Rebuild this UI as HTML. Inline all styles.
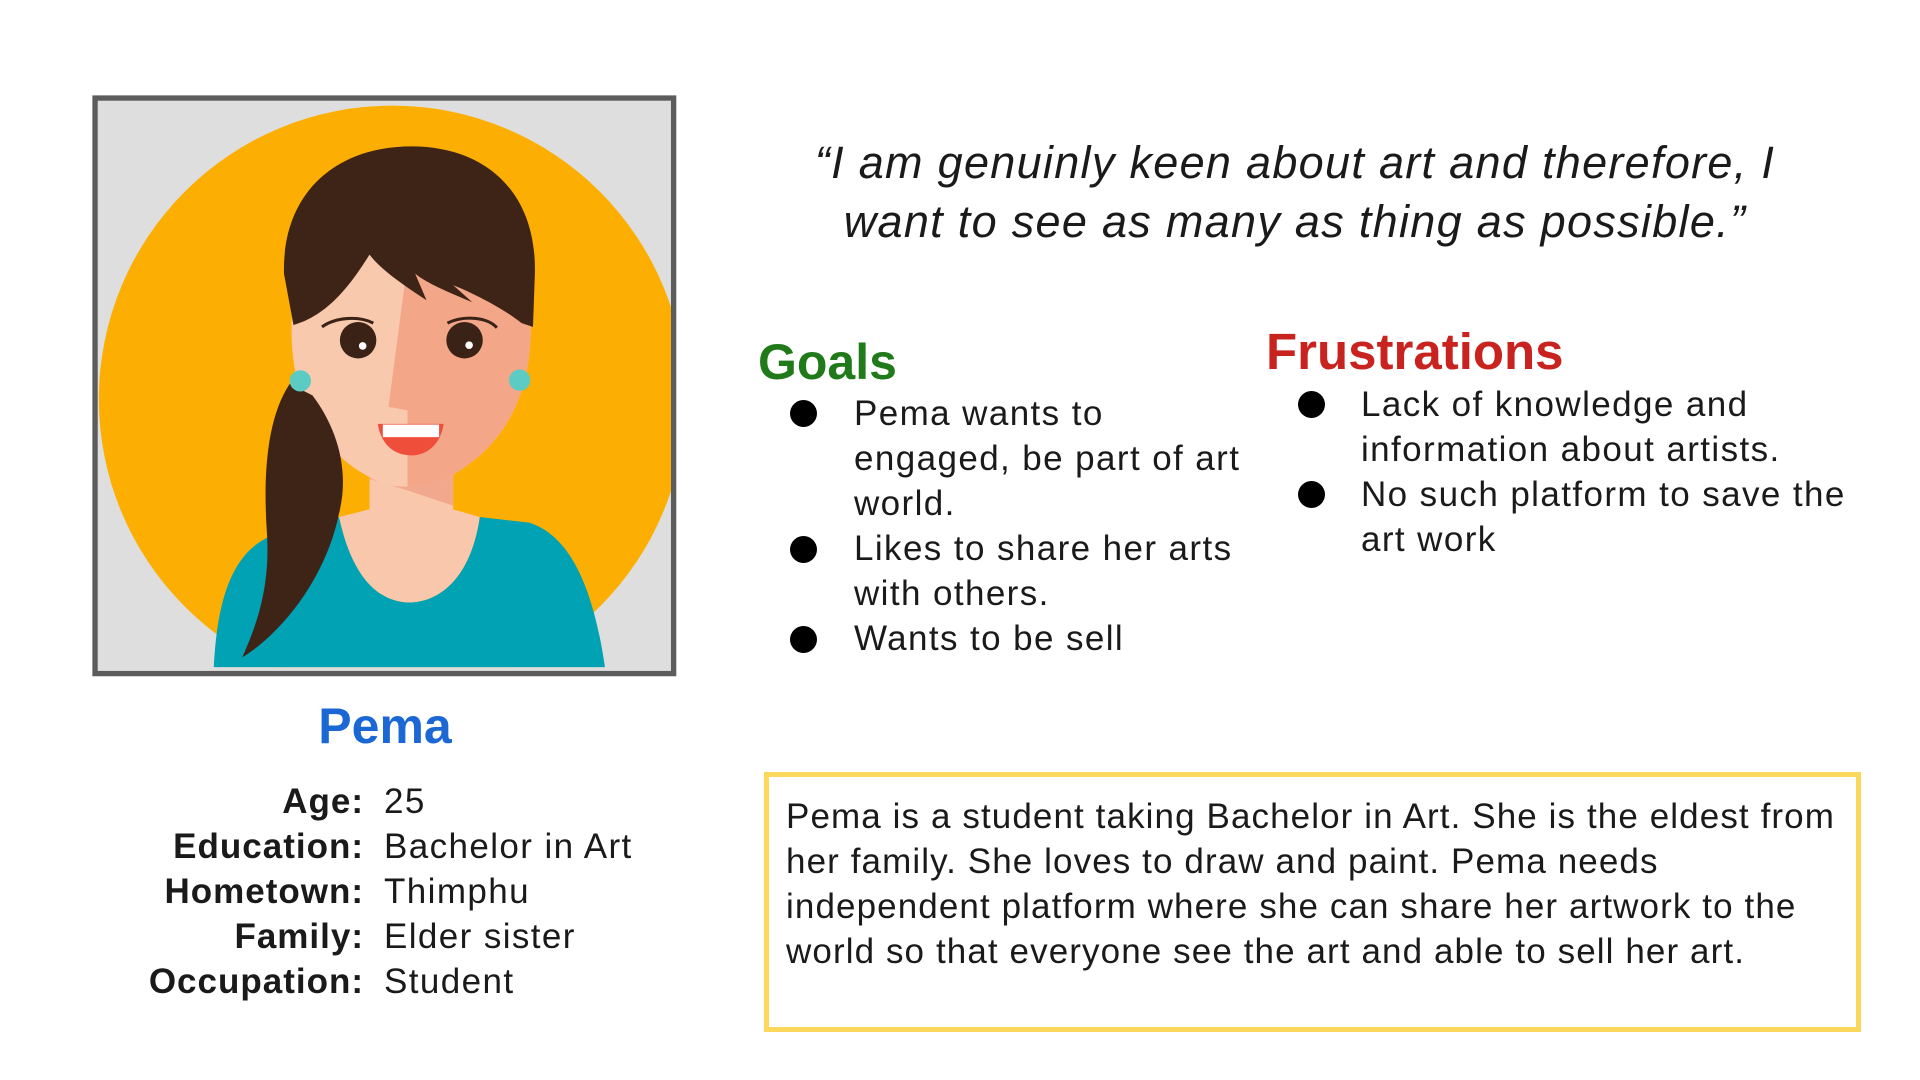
<!DOCTYPE html>
<html><head><meta charset="utf-8"><style>
html,body{margin:0;padding:0;background:#fff;}
body{width:1920px;height:1080px;position:relative;overflow:hidden;font-family:"Liberation Sans",sans-serif;color:#1a1a1a;}
.a{position:absolute;white-space:nowrap;}
.t{font-size:35px;line-height:45px;letter-spacing:1.4px;}
.dot{position:absolute;width:27px;height:27px;border-radius:50%;background:#000;}
</style></head><body>

<svg class="a" style="left:92px;top:95px" width="590" height="590" viewBox="0 0 1552 1552">
<defs>
<clipPath id="in"><rect x="15" y="15" width="1508" height="1490"/></clipPath>
<clipPath id="face"><path d="M525,600 C520,800 600,950 760,1020 C800,1035 880,1035 930,1010 C1080,930 1155,800 1155,600 L1150,420 L530,420 Z"/></clipPath>
</defs>
<rect x="8" y="8" width="1522" height="1514" fill="#dedede"/>
<g clip-path="url(#in)">
<circle cx="790" cy="800" r="772" fill="#fcaf02"/>
<path d="M320,1510 C330,1300 380,1200 470,1160 L650,1110 C680,1250 740,1330 830,1335 C930,1335 1000,1250 1020,1110 L1150,1125 C1260,1160 1320,1300 1350,1510 Z" fill="#00a2b3"/>
<path d="M730,960 L950,960 L950,1090 L1020,1110 C1000,1250 930,1335 830,1335 C740,1330 680,1250 650,1110 L730,1090 Z" fill="#f9c8ac"/>
<path d="M730,990 L950,990 L950,1080 L830,1040 L730,1010 Z" fill="#f2a88c"/>
<g clip-path="url(#face)">
<rect x="500" y="400" width="700" height="700" fill="#f9c9ae"/>
<path d="M830,440 L780,820 L830,830 L830,1100 L1200,1100 L1200,440 Z" fill="#f4a688"/>
</g>
<path d="M505,470 C500,250 650,135 840,135 C1040,135 1170,260 1165,470 L1160,610 L1130,600 C1080,560 1000,520 950,500 L1000,545 C940,520 880,495 850,470 L880,540 C820,500 760,460 730,420 C680,500 620,580 530,605 Z" fill="#3e2317"/>
<path d="M520,760 C460,850 450,1000 460,1150 C470,1300 430,1400 395,1480 C520,1400 620,1250 650,1100 C680,980 640,870 580,790 Z" fill="#3e2317"/>
<circle cx="700" cy="645" r="48" fill="#3b2217"/>
<circle cx="980" cy="645" r="48" fill="#3b2217"/>
<circle cx="712" cy="660" r="10" fill="#fff"/>
<circle cx="992" cy="658" r="10" fill="#fff"/>
<path d="M605,610 C640,585 700,580 740,600" stroke="#3b2217" stroke-width="8" fill="none"/>
<path d="M935,600 C980,578 1040,585 1065,612" stroke="#3b2217" stroke-width="8" fill="none"/>
<path d="M752,865 L925,865 C915,930 870,948 840,948 C795,948 760,920 752,865 Z" fill="#ef4e3a"/>
<rect x="765" y="867" width="148" height="33" fill="#fff"/>
<circle cx="548" cy="752" r="28" fill="#5ccbc4"/>
<circle cx="1125" cy="750" r="28" fill="#5ccbc4"/>
</g>
<rect x="8" y="8" width="1522" height="1514" fill="none" stroke="#5c5c5c" stroke-width="14"/>
</svg>

<div class="a" style="left:745px;width:1100px;top:133px;text-align:center;font-style:italic;font-size:45px;line-height:59px;letter-spacing:1.3px;color:#1a1a1a">“I am genuinly keen about art and therefore, I<br>want to see as many as thing as possible.”</div>

<div class="a" style="left:758px;top:332px;font-size:50px;line-height:60px;font-weight:bold;color:#217a1a">Goals</div>
<div class="dot" style="left:790px;top:400px"></div>
<div class="dot" style="left:790px;top:536px"></div>
<div class="dot" style="left:790px;top:626px"></div>
<div class="a t" style="left:854px;top:391px">Pema wants to<br>engaged, be part of art<br>world.<br>Likes to share her arts<br>with others.<br>Wants to be sell</div>

<div class="a" style="left:1266px;top:322px;font-size:51px;line-height:60px;font-weight:bold;color:#c8231f">Frustrations</div>
<div class="dot" style="left:1298px;top:391px"></div>
<div class="dot" style="left:1298px;top:481px"></div>
<div class="a t" style="left:1361px;top:382px">Lack of knowledge and<br>information about artists.<br>No such platform to save the<br>art work</div>

<div class="a" style="left:185px;width:400px;text-align:center;top:696px;font-size:50px;line-height:60px;font-weight:bold;color:#1b67d4">Pema</div>

<div class="a t" style="right:1556px;top:779px;text-align:right;font-weight:bold;letter-spacing:1px">Age:<br>Education:<br>Hometown:<br>Family:<br>Occupation:</div>
<div class="a t" style="left:384px;top:779px">25<br>Bachelor in Art<br>Thimphu<br>Elder sister<br>Student</div>

<div class="a" style="left:764px;top:772px;width:1087px;height:250px;border:5px solid #fbd75b"></div>
<div class="a t" style="left:786px;top:794px;letter-spacing:1.1px">Pema is a student taking Bachelor in Art. She is the eldest from<br>her family. She loves to draw and paint. Pema needs<br>independent platform where she can share her artwork to the<br>world so that everyone see the art and able to sell her art.</div>

</body></html>
